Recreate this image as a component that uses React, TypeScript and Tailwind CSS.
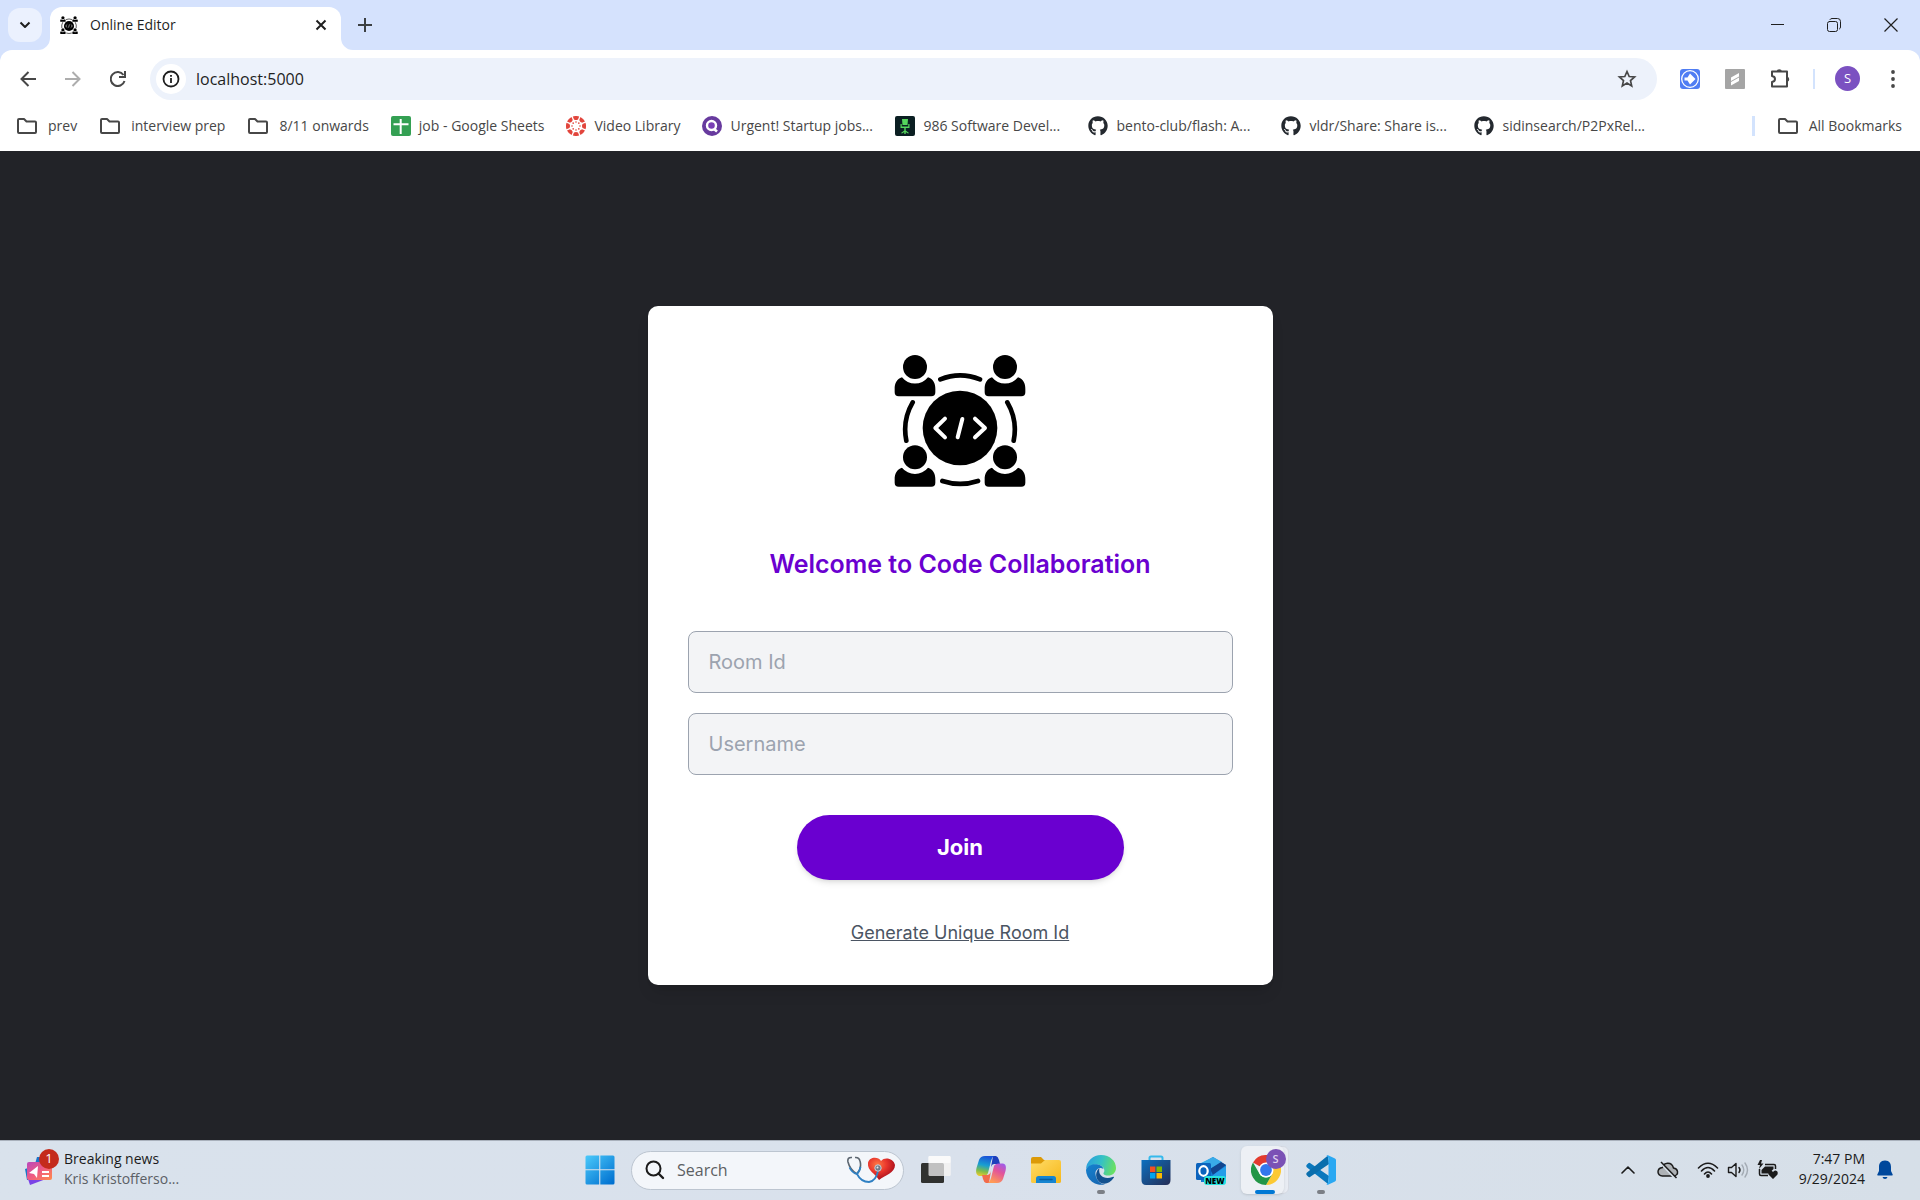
import React from "react";
import { FaGithub } from "react-icons/fa";

type IconProps = { className?: string };

const strokeProps = {
  fill: "none",
  stroke: "currentColor",
  strokeLinecap: "round" as const,
  strokeLinejoin: "round" as const,
};

function Person({ x, y }: { x: number; y: number }) {
  return (
    <g transform={`translate(${x} ${y})`}>
      <circle r="36" />
      <path d="M-39 31A50 50 0 0 0 39 31C55 36 61 50 61 66V76Q61 88 49 88H-49Q-61 88 -61 76V66C-61 50 -55 36 -39 31Z" />
    </g>
  );
}

function TeamLogo({ className, viewBox }: IconProps & { viewBox: string }) {
  return (
    <svg viewBox={viewBox} className={className} aria-hidden="true">
      <Person x={105} y={81} />
      <Person x={375} y={81} />
      <Person x={105} y={352} />
      <Person x={375} y={352} />
      <circle cx="240" cy="264" r="112" />
      <g fill="none" stroke="#000" strokeWidth="14" strokeLinecap="round">
        <path d="M181 118A159 159 0 0 1 300 118M187 423A170 170 0 0 0 294 423M98 187A163 163 0 0 0 79 302M382 187A163 163 0 0 1 401 302" />
        <path d="M195 236L166 264L195 292M247 237L233 292M285 236L315 264L285 292" stroke="#fff" strokeWidth="12" strokeLinejoin="round" />
      </g>
    </svg>
  );
}

function FolderIcon() {
  return (
    <svg viewBox="0 0 22 18" className="mr-[2px] h-[18px] w-[22px] shrink-0 text-[#474747]" aria-hidden="true">
      <path {...strokeProps} strokeWidth="2" d="M2 3Q2 2 3 2H8L10.500 4.500H19Q20 4.500 20 5.500V15Q20 16 19 16H3Q2 16 2 15Z" />
    </svg>
  );
}

function SheetsIcon() {
  return (
    <svg viewBox="0 0 20 20" className="size-5 shrink-0" aria-hidden="true">
      <rect width="20" height="20" rx="2" fill="#34a053" />
      <path d="M2.500 8.300H17.500M9.700 3V18" stroke="#fff" strokeWidth="2" />
    </svg>
  );
}

function CanvasIcon() {
  return (
    <svg viewBox="-10 -10 20 20" className="size-5 shrink-0" aria-hidden="true">
      {[0, 45, 90, 135, 180, 225, 270, 315].map((a) => (
        <g key={a} transform={`rotate(${a})`} fill="#e2453c">
          <path d="M-3.200 -9.500A10 10 0 0 1 3.200 -9.500L2 -6.600Q0 -5.400 -2 -6.600Z" />
          <circle cy="-4" r="0.800" />
        </g>
      ))}
    </svg>
  );
}

function StartupIcon() {
  return (
    <svg viewBox="0 0 20 20" className="size-5 shrink-0" aria-hidden="true">
      <circle cx="10" cy="10" r="10" fill="#673a9e" />
      <circle cx="9.500" cy="9.500" r="4.500" fill="#7a3fb5" stroke="#fff" strokeWidth="2.400" />
      <path d="M12 13L15 15.500" stroke="#fff" strokeWidth="2.600" />
    </svg>
  );
}

function ChairIcon() {
  return (
    <svg viewBox="0 0 20 20" className="size-5 shrink-0" aria-hidden="true">
      <rect width="20" height="20" rx="2" fill="#0b1f22" />
      <path d="M7 3H13L12.500 9H7.500ZM5.500 8H6.700V10.500H13.300V8H14.500V12H5.500ZM9.300 12H10.700V18H9.300ZM6 17L9.300 14.500V16L7 17.500ZM14 17L10.700 14.500V16L13 17.500Z" fill="#55d65c" />
    </svg>
  );
}

function Bookmark({ icon, label, fixed }: { icon: React.ReactNode; label: string; fixed?: boolean }) {
  return (
    <a href="#" className="flex shrink-0 items-center gap-2 whitespace-nowrap">
      {icon}
      <span className={fixed ? "w-[143px]" : ""}>{label}</span>
    </a>
  );
}

function TabStrip() {
  return (
    <header className="flex h-[50px] items-end bg-[#d5e2fd]">
      <button aria-label="Search tabs" className="mb-2 ml-2 flex h-[34px] w-[34px] items-center justify-center rounded-xl bg-[#ebf1fe]">
        <svg viewBox="0 0 12 8" className="h-2 w-3 text-[#1f1f1f]"><path {...strokeProps} strokeWidth="2" strokeLinecap="butt" d="M1.500 1.500L6 6L10.500 1.500" /></svg>
      </button>
      <div className="flex h-[43px] items-end">
        <svg viewBox="0 0 12 12" className="-ml-1 h-3 w-3"><path d="M12 0V12H0A12 12 0 0 0 12 0Z" fill="#fff" /></svg>
        <div className="flex h-full w-[291px] items-center rounded-t-xl bg-white px-[10px] pb-2">
          <TeamLogo viewBox="40 42 400 400" className="size-[18px]" />
          <span className="ml-3 flex-1 text-[14px] text-[#1f1f1f]">Online Editor</span>
          <button aria-label="Close tab" className="p-1">
            <svg viewBox="0 0 12 12" className="size-3 text-[#1f1f1f]"><path {...strokeProps} strokeWidth="2" strokeLinecap="butt" d="M1.500 1.500L10.500 10.500M10.500 1.500L1.500 10.500" /></svg>
          </button>
        </div>
        <svg viewBox="0 0 12 12" className="h-3 w-3"><path d="M0 0V12H12A12 12 0 0 1 0 0Z" fill="#fff" /></svg>
      </div>
      <button aria-label="New tab" className="mb-[18px] ml-[5px]">
        <svg viewBox="0 0 14 14" className="size-[14px] text-[#3c4043]"><path d="M7 0V14M0 7H14" stroke="currentColor" strokeWidth="2" /></svg>
      </button>
      <div className="ml-auto flex h-full items-center text-[#1f1f1f]">
        <button aria-label="Minimize" className="flex w-14 justify-center"><svg viewBox="0 0 14 14" className="size-[14px]"><path d="M0 6.500H13" stroke="currentColor" /></svg></button>
        <button aria-label="Restore" className="flex w-14 justify-center"><svg viewBox="0 0 14 14" className="size-[14px]"><rect {...strokeProps} x="0.500" y="3.500" width="10" height="10" rx="2" /><path {...strokeProps} d="M3 1.500Q3.500 0.500 5 0.500H10.500Q13.500 0.500 13.500 3.500V9Q13.500 10.500 12.500 11" /></svg></button>
        <button aria-label="Close window" className="flex w-[58px] justify-center"><svg viewBox="0 0 14 14" className="size-[14px]"><path d="M0.500 0.500L13.500 13.500M13.500 0.500L0.500 13.500" stroke="currentColor" strokeWidth="1.200" /></svg></button>
      </div>
    </header>
  );
}

function Toolbar() {
  return (
    <div className="bg-[#d5e2fd]">
      <nav aria-label="Navigation" className="flex h-[53px] items-center rounded-t-xl bg-white pt-1 text-[#474747]">
        <div className="ml-[5px] flex">
          <button aria-label="Back" className="flex w-[45px] justify-center"><svg viewBox="0 0 16 16" className="size-4"><path d="M16 8H2M8.500 1L1.500 8L8.500 15" fill="none" stroke="currentColor" strokeWidth="2" /></svg></button>
          <button aria-label="Forward" className="flex w-[45px] justify-center text-[#adadad]"><svg viewBox="0 0 16 16" className="size-4"><path d="M0 8H14M7.500 1L14.500 8L7.500 15" fill="none" stroke="currentColor" strokeWidth="2" /></svg></button>
          <button aria-label="Reload" className="flex w-[45px] justify-center"><svg viewBox="0 0 16 16" className="size-4"><path d="M14.500 10A7 7 0 1 1 13.500 4M15 0V6H9" fill="none" stroke="currentColor" strokeWidth="2" /></svg></button>
        </div>
        <div className="ml-[10px] flex h-[42px] flex-1 items-center rounded-full bg-[#edf2fb] pr-5 pl-[6px]">
          <button aria-label="Site information" className="flex size-[30px] items-center justify-center rounded-full bg-white">
            <svg viewBox="0 0 18 18" className="size-[18px] text-[#1f1f1f]"><circle cx="9" cy="9" r="7.500" {...strokeProps} strokeWidth="1.800" /><path d="M9 8V13M9 5V6.800" stroke="currentColor" strokeWidth="1.800" /></svg>
          </button>
          <input aria-label="Address" defaultValue="localhost:5000" className="ml-[10px] min-w-0 flex-1 bg-transparent text-[16px] text-[#1f1f1f] outline-none" />
          <button aria-label="Bookmark this page">
            <svg viewBox="0 0 20 20" className="size-5"><path d="M10 2.500L12.200 7.500L17.600 8L13.500 11.600L14.700 16.900L10 14.100L5.300 16.900L6.500 11.600L2.400 8L7.800 7.500Z" fill="none" stroke="currentColor" strokeWidth="1.700" /></svg>
          </button>
        </div>
        <div className="ml-[10px] flex items-center pr-[5px]">
          <button aria-label="Blue extension" className="flex w-[45px] justify-center">
            <svg viewBox="0 0 20 20" className="size-5"><rect width="20" height="20" rx="3" fill="#4f7df3" /><circle cx="10" cy="10" r="8.300" fill="none" stroke="#fff" strokeWidth="1.300" /><path d="M4.500 8.500H7.500L10 4.500L15.500 10L10 15.500L7.500 11.500H4.500Z" fill="#fff" /></svg>
          </button>
          <button aria-label="Gray extension" className="flex w-[45px] justify-center">
            <svg viewBox="0 0 20 20" className="size-5"><rect width="20" height="20" rx="1" fill="#a5a5a5" /><path d="M6 8.500L14 4V7.500L6 12ZM6 13L14 8.500V12L6 16.500Z" fill="#fff" /></svg>
          </button>
          <button aria-label="Extensions" className="flex w-[45px] justify-center">
            <svg viewBox="0 0 22 22" className="size-[22px]"><path d="M3 3.500H18V18.500H3V14Q6 13.500 6 11T3 8Z" fill="none" stroke="currentColor" strokeWidth="2" strokeLinejoin="round" /><path d="M7.500 3.500A2.800 2.800 0 0 1 13 3.500ZM18 8.500A2.800 2.800 0 0 1 18 14Z" fill="currentColor" /></svg>
          </button>
          <span className="ml-[11px] h-5 w-[2px] bg-[#d3e3fd]" />
          <button aria-label="Profile" className="ml-5 flex size-[25px] items-center justify-center rounded-full bg-[#7b51c1] text-[13px] font-medium text-white">S</button>
          <button aria-label="Menu" className="ml-[10px] flex w-[45px] justify-center">
            <svg viewBox="0 0 4 18" className="h-[18px] w-1" fill="currentColor"><circle cx="2" cy="2" r="1.900" /><circle cx="2" cy="9" r="1.900" /><circle cx="2" cy="16" r="1.900" /></svg>
          </button>
        </div>
      </nav>
    </div>
  );
}

function BookmarkBar() {
  const github = <FaGithub className="size-5 shrink-0 text-[#24292f]" />;
  return (
    <nav aria-label="Bookmarks" className="flex h-12 items-center gap-[22px] bg-white pr-[18px] pb-[3px] pl-4 text-[14px] text-[#474747]">
      <Bookmark icon={<FolderIcon />} label="prev" />
      <Bookmark icon={<FolderIcon />} label="interview prep" />
      <Bookmark icon={<FolderIcon />} label="8/11 onwards" />
      <Bookmark icon={<SheetsIcon />} label="job - Google Sheets" />
      <Bookmark icon={<CanvasIcon />} label="Video Library" />
      <Bookmark icon={<StartupIcon />} label="Urgent! Startup jobs..." fixed />
      <Bookmark icon={<ChairIcon />} label="986 Software Devel..." fixed />
      <Bookmark icon={github} label="bento-club/flash: A..." fixed />
      <Bookmark icon={github} label="vldr/Share: Share is..." fixed />
      <Bookmark icon={github} label="sidinsearch/P2PxRel..." fixed />
      <span className="ml-auto h-5 w-[3px] bg-[#d3e3fd]" />
      <Bookmark icon={<FolderIcon />} label="All Bookmarks" />
    </nav>
  );
}

function JoinPage() {
  const field = "h-[62px] w-full rounded-lg border border-[#9ca3af] bg-[#f3f4f6] px-5 text-[20px] text-black outline-none placeholder:text-[#9ca3af]";
  return (
    <main className="flex flex-1 items-center justify-center bg-[#222328] font-[Inter,sans-serif]">
      <form className="flex w-[625px] flex-col items-center rounded-[10px] bg-white px-10 pt-[34px] pb-10 shadow-lg">
        <TeamLogo viewBox="0 0 480 480" className="size-40" />
        <h1 className="mt-[35px] text-[25px] leading-[58px] font-semibold text-[#6a00d0]">Welcome to Code Collaboration</h1>
        <div className="mt-[38px] flex w-full flex-col gap-5">
          <input aria-label="Room Id" placeholder="Room Id" className={field} />
          <input aria-label="Username" placeholder="Username" className={field} />
        </div>
        <button type="button" className="mt-10 h-[65px] w-3/5 rounded-full bg-[#6a00d0] text-[22px] font-bold text-white shadow-md">Join</button>
        <a href="#" className="mt-10 text-[18px] leading-[25px] text-[#4b5563] underline">Generate Unique Room Id</a>
      </form>
    </main>
  );
}

function TaskItem({ label, children, state }: { label: string; children: React.ReactNode; state?: "running" | "active" }) {
  return (
    <button aria-label={label} className="relative flex h-[60px] w-[55px] items-center justify-center">
      {state === "active" && (
        <>
          <span className="absolute top-[6px] left-2 h-12 w-[43px] rounded-md border border-[#d5d9e2] bg-[#e8ecf3]" />
          <span className="absolute top-[6px] left-[3px] h-12 w-[43px] rounded-md bg-[#edf0f5] shadow-sm" />
          <span className="absolute bottom-[6px] left-[17px] h-1 w-5 rounded-full bg-[#0078d4]" />
        </>
      )}
      {state === "running" && <span className="absolute bottom-[6px] h-1 w-2 rounded-full bg-[#7b7f86]" />}
      <span className="relative size-[30px]">{children}</span>
    </button>
  );
}

function StartIcon() {
  return (
    <svg viewBox="0 0 30 30" className="size-[30px]">
      <defs><linearGradient id="start" gradientUnits="userSpaceOnUse" x1="0" y1="0" x2="26" y2="30"><stop stopColor="#4ccbfb" /><stop offset="1" stopColor="#0070d0" /></linearGradient></defs>
      <path d="M2 0.500H14.200V14.200H0.500V2Q0.500 0.500 2 0.500ZM15.300 0.500H28Q29.500 0.500 29.500 2V14.200H15.300ZM0.500 15.300H14.200V29.500H2Q0.500 29.500 0.500 28ZM15.300 15.300H29.500V28Q29.500 29.500 28 29.500H15.300Z" fill="url(#start)" />
    </svg>
  );
}

function HeartIcon() {
  return (
    <svg viewBox="0 0 48 28" className="h-7 w-12" aria-hidden="true">
      <defs><radialGradient id="heart" cx="0.350" cy="0.300" r="0.700"><stop stopColor="#ff7a45" /><stop offset="0.500" stopColor="#e8352c" /><stop offset="1" stopColor="#a80f1c" /></radialGradient></defs>
      <path d="M32 24C29 18 20 15 21 7C22 1 31 0 34 5C38 0 47 3 48 9C48 17 38 19 32 24Z" fill="url(#heart)" />
      <path d="M5 1.500Q0 1 1 6Q3 14 10 18Q15 12 13 5Q12 1 8 1.500" fill="none" stroke="#5c6670" strokeWidth="1.600" />
      <path d="M2.500 11.500Q5 17 10 18Q14 26 22 26Q29 25 31 15M10 18Q13 15 13.500 11" fill="none" stroke="#2f80c3" strokeWidth="1.800" />
      <circle cx="31" cy="12" r="3.200" fill="#6f7a87" stroke="#c9d0d8" /><circle cx="30.500" cy="11.500" r="1" fill="#e6eaee" />
    </svg>
  );
}

function TaskViewIcon() {
  return (
    <svg viewBox="0 0 30 30" className="size-[30px]">
      <rect x="0" y="8" width="23" height="20" rx="1.500" fill="#30312f" />
      <rect x="7.500" y="1" width="22" height="20" rx="1.500" fill="#fff" fillOpacity="0.700" /><path d="M23 1H28Q29.500 1 29.500 2.500V19.500Q29.500 21 28 21H23Z" fill="#f1f1f1" /><rect x="7.500" y="1" width="22" height="7" rx="1" fill="#fafafa" />
    </svg>
  );
}

function CopilotIcon() {
  return (
    <svg viewBox="0 0 30 30" className="size-[30px]">
      <defs>
        <linearGradient id="copA" x1="0.500" y1="0" x2="0.300" y2="1"><stop stopColor="#1b54d8" /><stop offset="0.450" stopColor="#199fd1" /><stop offset="0.750" stopColor="#7cbc4d" /><stop offset="1" stopColor="#e8c92c" /></linearGradient>
        <linearGradient id="copB" x1="0.900" y1="0" x2="0.400" y2="1"><stop stopColor="#9a5cf0" /><stop offset="0.450" stopColor="#e2549a" /><stop offset="1" stopColor="#ff9a56" /></linearGradient>
      </defs>
      <path d="M17 1H20Q22 1.500 23 5L24 9H18Q16 9 15 12Z" fill="#1d3fbc" />
      <path d="M9 1H18Q16 2 15 6L12 18Q11 21 7 21H3Q-1 20 0.500 13L3 5Q4.500 1 9 1Z" fill="url(#copA)" />
      <path d="M13 28H10Q8 27.500 7 24L6 20H11Q14 20 15 16Z" fill="#f26b4c" />
      <path d="M21 28H12Q14 27 15 23L18 11Q19 8.500 23 8.500H27Q31 9 29.500 16L27 24Q25.500 28 21 28Z" fill="url(#copB)" />
    </svg>
  );
}

function ExplorerIcon() {
  return (
    <svg viewBox="0 0 30 30" className="size-[30px]">
      <defs><linearGradient id="folder" x1="0" y1="0" x2="1" y2="1"><stop stopColor="#ffdc68" /><stop offset="1" stopColor="#f6b719" /></linearGradient></defs>
      <path d="M0 4Q0 2 2 2H10L13 5H20V12H0Z" fill="#dc9a08" />
      <path d="M0 8.500H10L14 5H28Q30 5 30 7V26.500Q30 28 28 28H2Q0 28 0 26.500Z" fill="url(#folder)" />
      <path d="M5 28V23.500Q5 21 7.500 21H22.500Q25 21 25 23.500V28Z" fill="#1685d1" /><path d="M9 24.500H21" stroke="#0a5d9e" strokeWidth="1.500" strokeLinecap="round" />
    </svg>
  );
}

function EdgeIcon() {
  return (
    <svg viewBox="0 0 30 30" className="size-[30px]">
      <defs>
        <linearGradient id="edgeTop" x1="0" y1="0.300" x2="1" y2="0.500"><stop stopColor="#2a9ede" /><stop offset="0.500" stopColor="#35c1c5" /><stop offset="1" stopColor="#6be15f" /></linearGradient>
        <linearGradient id="edgeLow" x1="0" y1="0" x2="0.500" y2="1"><stop stopColor="#1582cf" /><stop offset="1" stopColor="#1669b5" /></linearGradient>
      </defs>
      <path d="M0 14A15 15 0 0 1 15 0C24 0 30 6 30 13C30 18 26 20.500 22.500 20.500C19 20.500 17 19.500 17.500 18C20 15 17 10 11 9.500C6 9.200 2 12 0 14Z" fill="url(#edgeTop)" />
      <path d="M0 15C1 11 6 8.500 11 9.300C15 10 17 12 17.500 14C13 11 9 15 9.500 19C10 25 14 29 19 29.300A15 15 0 0 1 0 15Z" fill="url(#edgeLow)" />
      <path d="M13.500 13C9.500 16 9 22 12.500 26C16 30 23 30 28 22.500C28 21.500 27.500 21.500 26.500 22C19 25 11.500 21 13.500 13Z" fill="#13518f" />
    </svg>
  );
}

function StoreIcon() {
  return (
    <svg viewBox="0 0 30 30" className="size-[30px]">
      <defs><linearGradient id="store" x1="0" y1="0" x2="1" y2="1"><stop stopColor="#0c70c0" /><stop offset="1" stopColor="#252d55" /></linearGradient></defs>
      <path d="M8.500 7V3Q8.500 1.500 10 1.500H20Q21.500 1.500 21.500 3V7" fill="none" stroke="#35b9ec" strokeWidth="2" />
      <path d="M0.500 5H29.500V25Q29.500 30 25 30H5Q0.500 30 0.500 25Z" fill="url(#store)" />
      <path d="M9 11.500H14.300V17H9Z" fill="#f35022" /><path d="M15.500 11.500H21V17H15.500Z" fill="#7fb900" /><path d="M9 18H14.300V23.500H9Z" fill="#00a4ee" /><path d="M15.500 18H21V23.500H15.500Z" fill="#ffb901" />
    </svg>
  );
}

function OutlookIcon() {
  return (
    <>
      <svg viewBox="0 0 30 30" className="size-[30px]">
        <path d="M5 9L17 2L30 10V27H5Z" fill="#167bd0" /><path d="M5 8L17 2L26 7L14 14Z" fill="#39abe8" /><path d="M14 14L25 7L30 10L17 20Z" fill="#12458e" /><path d="M17 20L30 11V27H15Z" fill="#259de8" />
        <rect x="0" y="8" width="15" height="17" rx="1.500" fill="#0b63bd" /><ellipse cx="7.500" cy="16" rx="4.200" ry="4.800" fill="none" stroke="#fff" strokeWidth="2.200" />
      </svg>
      <span className="absolute right-0 bottom-0 rounded-[3px] bg-[#27e3e0] px-px text-[8px] leading-[9px] font-extrabold text-black">NEW</span>
    </>
  );
}

function ChromeIcon() {
  return (
    <>
      <svg viewBox="0 0 30 30" className="size-[30px]">
        <path d="M15 15L2 7.500A15 15 0 0 1 28 7.500H15Z" fill="#e33b2e" />
        <path d="M15 7.500H28A15 15 0 0 1 15 30L21.500 18.750Z" fill="#fcc934" />
        <path d="M15 30A15 15 0 0 1 2 7.500L8.500 18.750A7.500 7.500 0 0 0 21.500 18.750Z" fill="#239647" />
        <circle cx="15" cy="15" r="7.500" fill="#fff" /><circle cx="15" cy="15" r="5.900" fill="#3477ec" />
      </svg>
      <span className="absolute -top-[6px] -right-[5px] flex size-5 items-center justify-center rounded-full bg-[#7b51b5] text-[11px] font-semibold text-[#ddcfee]">S</span>
    </>
  );
}

function VsCodeIcon() {
  return (
    <svg viewBox="0 0 30 30" className="size-[30px]">
      <path d="M1 9.500Q-0.500 11 1 12.500L22 29L23 21L4 8Q3 7.500 2.300 8.200Z" fill="#0a78bd" />
      <path d="M1 20.500Q-0.500 19 1 17.500L22 0.500L23 9L4 22Q3 22.500 2.300 21.800Z" fill="#0a6ead" />
      <path d="M22 0.300L28.500 3.200Q30 4 30 5V25Q30 26 28.500 26.800L22 29.700Q21 30 20.500 29.200Q22.500 28 22.500 26V4Q22.500 2 20.500 0.800Q21 0 22 0.300Z" fill="#2aa8f2" />
    </svg>
  );
}

function Tray() {
  return (
    <div className="flex items-center justify-end pr-[27px] text-[#1b1b1b]">
      <button aria-label="Show hidden icons" className="mr-[22px]"><svg viewBox="0 0 14 8" className="h-2 w-[14px]"><path {...strokeProps} strokeWidth="1.600" d="M1 7L7 1L13 7" /></svg></button>
      <svg viewBox="0 0 22 18" className="mr-[18px] h-[18px] w-[22px]" aria-label="OneDrive">
        <path d="M5.500 15H16.500Q21 14.500 20.500 10.500Q20 7.500 16.500 7Q15 2 10.500 2.300Q6.500 2.500 5.500 6.500Q1 7 1 11Q1.200 14.500 5.500 15Z" fill="#aeb2b6" stroke="currentColor" strokeWidth="1.500" />
        <path d="M3 1.500L18.500 18" stroke="#d6dfe8" strokeWidth="2" /><path d="M4 1L19.500 17" stroke="currentColor" strokeWidth="1.500" />
      </svg>
      <button aria-label="Network, volume and battery" className="flex items-center gap-2">
        <svg viewBox="0 0 22 18" className="h-[18px] w-[22px]"><path {...strokeProps} strokeWidth="1.600" d="M1.500 7Q11 -2.500 20.500 7M4.500 10Q11 3 17.500 10M7.500 13Q11 9 14.500 13" /><circle cx="11" cy="15" r="1.900" fill="currentColor" /></svg>
        <svg viewBox="0 0 22 18" className="h-[18px] w-[22px]"><path {...strokeProps} strokeWidth="1.400" d="M1.500 6.500H4.500L9 2.500V15.500L4.500 11.500H1.500Z" /><path {...strokeProps} strokeWidth="1.400" d="M12 6.500Q14 9 12 11.500" /><path {...strokeProps} stroke="#a3abb4" strokeWidth="1.400" d="M15 4Q18.500 9 15 14M18 2Q23 9 18 16" /></svg>
        <svg viewBox="0 0 22 20" className="h-5 w-[22px]"><path d="M8 4.500H17Q18.500 4.500 18.500 6V9M11 15.500H4Q2.500 15.500 2.500 14V9" fill="none" stroke="currentColor" strokeWidth="1.500" /><path d="M8 6.500H16.500V9L12 13.500H4.500V10Z" fill="currentColor" /><path d="M3 0L0.500 5H3L2 9L6.500 3.500H4L5 0Z" fill="currentColor" /><path d="M16 19L11.500 14.500Q10.500 11 13.500 10.500Q15 10.300 16 12Q17 10.300 18.500 10.500Q21.500 11 20.500 14.500Z" fill="currentColor" /></svg>
      </button>
      <button className="ml-5 flex flex-col items-end pb-[2px] text-[14px] leading-5">
        <span>7:47 PM</span>
        <span>9/29/2024</span>
      </button>
      <button aria-label="Notifications" className="ml-3"><svg viewBox="0 0 16 20" className="h-5 w-4" fill="#00489c"><path d="M8 0.500C3.500 0.500 2 3.500 2 7V11L0.300 14.500Q0 15.500 1 15.500H15Q16 15.500 15.700 14.500L14 11V7C14 3.500 12.500 0.500 8 0.500ZM5.500 17H10.500Q10 19 8 19T5.500 17Z" /></svg></button>
    </div>
  );
}

function Taskbar() {
  return (
    <footer className="grid h-[60px] grid-cols-[1fr_auto_1fr] bg-linear-to-r from-[#d9e2ec] via-[#d9e1ec] to-[#d6dfe8] shadow-[inset_0_1px_0_#a9b1bc]">
      <button className="flex items-center gap-[10px] pl-[25px] text-left">
        <span className="relative">
          <svg viewBox="0 0 29 29" className="size-[29px]" aria-hidden="true">
            <defs><linearGradient id="news" x1="0" y1="0" x2="1" y2="1"><stop stopColor="#b948bd" /><stop offset="0.500" stopColor="#ef5b82" /><stop offset="1" stopColor="#ff8b4a" /></linearGradient></defs>
            <path d="M12 1H24V8H10Z" fill="#1c74c9" /><path d="M0 13L3 12V24L2 24Z" fill="#1978c8" /><path d="M3 23L21 23L5 29Z" fill="#7b43e6" /><rect x="2" y="6" width="25" height="18" rx="2" fill="url(#news)" /><path d="M4 17L13 10L12 22L9 18ZM17 15H24V17H17ZM17 19H24V21H17Z" fill="#fff" />
          </svg>
          <span className="absolute -top-[7px] -right-[5px] flex size-5 items-center justify-center rounded-full bg-[#c42b1c] text-[13px] text-white">1</span>
        </span>
        <span className="flex flex-col pb-[2px] text-[14px] leading-5 text-[#1b1b1b]">
          <span>Breaking news</span>
          <span className="text-[#5b6066]">Kris Kristofferso...</span>
        </span>
      </button>
      <div className="flex items-center">
        <TaskItem label="Start"><StartIcon /></TaskItem>
        <label className="mr-[4px] ml-[4px] flex h-[39px] w-[273px] items-center rounded-full border border-[#bcc5d0] bg-[#f3f6fa] pr-2 pl-[13px]">
          <svg viewBox="0 0 20 20" className="size-5 text-[#1b1b1b]"><circle cx="8.500" cy="8.500" r="7" {...strokeProps} strokeWidth="2" /><path {...strokeProps} strokeWidth="2.400" d="M13.500 13.500L18 18" /></svg>
          <input aria-label="Search" placeholder="Search" className="ml-3 min-w-0 flex-1 bg-transparent text-[16px] outline-none placeholder:text-[#5c5f63]" />
          <HeartIcon />
        </label>
        <TaskItem label="Task view"><TaskViewIcon /></TaskItem>
        <TaskItem label="Copilot"><CopilotIcon /></TaskItem>
        <TaskItem label="File Explorer"><ExplorerIcon /></TaskItem>
        <TaskItem label="Microsoft Edge" state="running"><EdgeIcon /></TaskItem>
        <TaskItem label="Microsoft Store"><StoreIcon /></TaskItem>
        <TaskItem label="Outlook"><OutlookIcon /></TaskItem>
        <TaskItem label="Google Chrome" state="active"><ChromeIcon /></TaskItem>
        <TaskItem label="Visual Studio Code" state="running"><VsCodeIcon /></TaskItem>
      </div>
      <Tray />
    </footer>
  );
}

export default function App() {
  return (
    <div className="flex min-h-screen flex-col font-['Open_Sans',sans-serif]">
      <TabStrip />
      <Toolbar />
      <BookmarkBar />
      <JoinPage />
      <Taskbar />
    </div>
  );
}
